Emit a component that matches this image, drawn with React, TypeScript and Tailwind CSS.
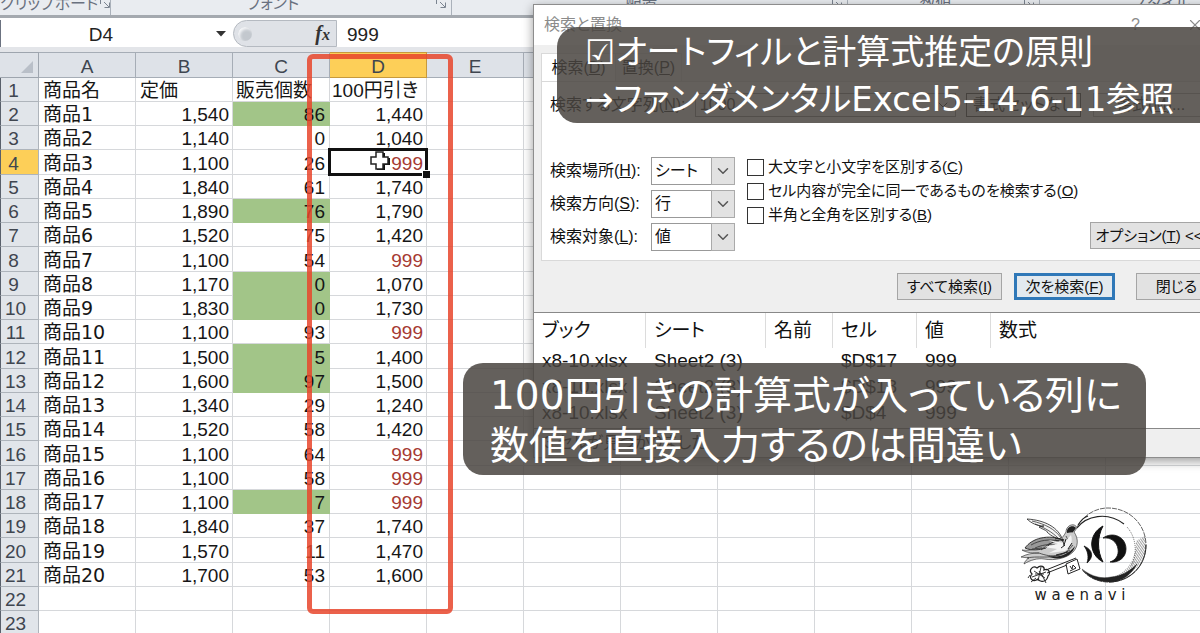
import React from 'react';
import { ChevronDown, X } from 'lucide-react';

interface Product {
  price: string;
  sold: number;
  discounted: string;
  highlighted?: boolean;
}

const products: Product[] = [
  { price: '1,540', sold: 86, discounted: '1,440', highlighted: true },
  { price: '1,140', sold: 0, discounted: '1,040' },
  { price: '1,100', sold: 26, discounted: '999' },
  { price: '1,840', sold: 61, discounted: '1,740' },
  { price: '1,890', sold: 76, discounted: '1,790', highlighted: true },
  { price: '1,520', sold: 75, discounted: '1,420' },
  { price: '1,100', sold: 54, discounted: '999' },
  { price: '1,170', sold: 0, discounted: '1,070', highlighted: true },
  { price: '1,830', sold: 0, discounted: '1,730', highlighted: true },
  { price: '1,100', sold: 93, discounted: '999' },
  { price: '1,500', sold: 5, discounted: '1,400', highlighted: true },
  { price: '1,600', sold: 97, discounted: '1,500', highlighted: true },
  { price: '1,340', sold: 29, discounted: '1,240' },
  { price: '1,520', sold: 58, discounted: '1,420' },
  { price: '1,100', sold: 64, discounted: '999' },
  { price: '1,100', sold: 58, discounted: '999' },
  { price: '1,100', sold: 7, discounted: '999', highlighted: true },
  { price: '1,840', sold: 37, discounted: '1,740' },
  { price: '1,570', sold: 11, discounted: '1,470' },
  { price: '1,700', sold: 53, discounted: '1,600' },
];

const columns = ['A', 'B', 'C', 'D', 'E', 'F', 'G', 'H', 'I', 'J', 'K', 'L'];
const emptyColumns = columns.slice(4);

const results = ['$D$17', '$D$18', '$D$4'];

const Launcher: React.FC = () => (
  <svg className="mb-1.5 h-3 w-3 shrink-0" viewBox="0 0 12 12" fill="none" stroke="#7b8490">
    <path d="M1.5 7V1.5H7M5 5l5 5M10.500 5.500v5h-5" />
  </svg>
);

const RibbonGroup: React.FC<{ label: string; className: string }> = ({ label, className }) => (
  <div className={`flex shrink-0 items-end border-r border-[#aab1ba] pr-1 ${className}`}>
    <span className="flex-1 text-center text-base leading-[22px] whitespace-nowrap text-[#69717f]">{label}</span>
    <Launcher />
  </div>
);

const Ribbon: React.FC = () => (
  <div className="flex h-[18px] items-end overflow-hidden border-b-[3px] border-[#a4a9af] bg-[#e9ecf0] [font-feature-settings:'palt']">
    <RibbonGroup label="クリップボード" className="w-[111px]" />
    <RibbonGroup label="フォント" className="w-[341px]" />
    <RibbonGroup label="配置" className="w-[396px]" />
    <RibbonGroup label="数値" className="w-[192px]" />
    <RibbonGroup label="スタイル" className="w-[260px]" />
  </div>
);

const FormulaBar: React.FC = () => (
  <div className="flex h-[34px] items-center border-b-[5px] border-[#e3e5e9] bg-white pt-0.5">
    <div className="flex h-full w-[233px] items-center border-l border-[#6b7280]">
      <input
        aria-label="名前ボックス"
        defaultValue="D4"
        className="w-[200px] bg-transparent pt-1 text-center text-[19px] text-[#222] outline-none"
      />
      <svg className="ml-3.5 h-2 w-3" viewBox="0 0 12 8" fill="#333">
        <path d="M1 1h10L6 6.500z" />
      </svg>
    </div>
    <div className="flex h-[27px] w-[104px] items-center justify-between rounded-l-full border border-[#b5bac1] bg-[#dfe2e7] pr-1.5 pl-1">
      <span className="h-3.5 w-3.5 rounded-full bg-[#c3c8ce] shadow-[inset_2px_2px_3px_#f5f6f8]" />
      <button className="font-['Liberation_Serif',serif] text-xl leading-6 font-bold text-[#333] italic">
        f<span className="text-base">x</span>
      </button>
    </div>
    <input
      aria-label="数式バー"
      defaultValue="999"
      className="min-w-0 flex-1 bg-transparent pt-1 pl-2.5 text-[19px] text-[#222] outline-none"
    />
  </div>
);

const SelectionFrame: React.FC = () => (
  <>
    <span className="absolute -inset-x-0.5 -top-0.5 -bottom-0.5 z-10 border-[3px] border-[#111]" />
    <span className="absolute -right-1 -bottom-1 z-10 h-2 w-2 border-t border-l border-white bg-[#111]" />
    <svg className="absolute top-0 left-[39px] h-[22px] w-[22px]" viewBox="0 0 22 22">
      <path d="M8 3h8v5h5v7h-5v5H8" fill="#111" />
      <path
        d="M7 2h7v5h5v7h-5v5H7v-5H2V7h5z"
        fill="#fff"
        stroke="#222"
        strokeWidth="1.500"
      />
    </svg>
  </>
);

const cell = 'relative border-r border-b p-0 pt-0.5 whitespace-nowrap';
const line = 'border-[#d6d8db]';
const rowHeader =
  'border-r border-b border-l border-[#aeb4bb] border-l-[#59606b] p-0 pt-0.5 text-[#3f4650] font-normal';

const Sheet: React.FC = () => (
  <table className="w-[1203px] table-fixed border-separate border-spacing-0 text-[19px] leading-[21px] text-[#161616]">
    <colgroup>
      <col className="w-[39px]" />
      {columns.map((name) => (
        <col key={name} className="w-[97px]" />
      ))}
    </colgroup>
    <thead>
      <tr className="h-[26px] bg-[#dee2e8] text-[#3f4650]">
        <th aria-label="すべて選択" className="border-t border-r border-b border-[#9ea5ae] p-0">
          <svg className="mt-1 mr-1 ml-auto h-3.5 w-3.5" viewBox="0 0 14 14" fill="#b9bfc8">
            <path d="M13 1v12H1z" />
          </svg>
        </th>
        {columns.map((name) => (
          <th
            key={name}
            scope="col"
            className={`border-t border-r border-b p-0 pt-0.5 font-normal ${
              name === 'D' ? 'border-[#c79a3c] bg-[#fdcf58]' : 'border-[#a6adb6]'
            }`}
          >
            {name}
          </th>
        ))}
      </tr>
    </thead>
    <tbody className="[&>tr]:h-6 [&>tr:nth-child(4n)]:h-[25px]">
      <tr>
        <th scope="row" className={`${rowHeader} bg-[#e1e5ea] pr-3`}>1</th>
        <td className={`${cell} ${line} pl-1`}>商品名</td>
        <td className={`${cell} ${line} pl-1`}>定価</td>
        <td className={`${cell} ${line} pl-[3px]`}>販売個数</td>
        <td className={`${cell} ${line} pl-0.5 [font-feature-settings:'palt']`}>100円引き</td>
        {emptyColumns.map((name) => (
          <td key={name} className={`${cell} ${line}`} />
        ))}
      </tr>
      {products.map((product, index) => (
        <tr key={index}>
          <th
            scope="row"
            className={`${rowHeader} ${index < 8 ? 'pr-3' : 'pr-2'} ${index === 2 ? 'bg-[#fdcf58]' : 'bg-[#e1e5ea]'}`}
          >
            {index + 2}
          </th>
          <td className={`${cell} ${line} pl-1`}>
            商品<span className="font-['DejaVu_Sans',sans-serif]">{index + 1}</span>
          </td>
          <td className={`${cell} ${line} pr-[3px] text-right`}>{product.price}</td>
          <td
            className={`${cell} pr-1 text-right ${product.highlighted ? 'border-[#a2c588] bg-[#a2c588]' : line}`}
          >
            {product.sold}
          </td>
          <td className={`${cell} ${line} pr-[3px] text-right ${product.discounted === '999' ? 'text-[#a63a32]' : ''}`}>
            {index === 2 && <SelectionFrame />}
            <span className="relative">{product.discounted}</span>
          </td>
          {emptyColumns.map((name) => (
            <td key={name} className={`${cell} ${line}`} />
          ))}
        </tr>
      ))}
      {[22, 23].map((row) => (
        <tr key={row}>
          <th scope="row" className={`${rowHeader} bg-[#e1e5ea] pr-2`}>{row}</th>
          {columns.map((name) => (
            <td key={name} className={`${cell} ${line}`} />
          ))}
        </tr>
      ))}
    </tbody>
  </table>
);

const options = [
  { id: 'place', label: '検索場所', shortcut: 'H', value: 'シート' },
  { id: 'direction', label: '検索方向', shortcut: 'S', value: '行' },
  { id: 'target', label: '検索対象', shortcut: 'L', value: '値' },
];

const checks = [
  { label: '大文字と小文字を区別する', shortcut: 'C' },
  { label: 'セル内容が完全に同一であるものを検索する', shortcut: 'O' },
  { label: '半角と全角を区別する', shortcut: 'B' },
];

const button = 'h-[27px] shrink-0 border border-[#a5a5a5] bg-[#e2e2e2] text-[15px] whitespace-nowrap';

const FindDialog: React.FC = () => (
  <div
    role="dialog"
    aria-labelledby="find-title"
    className="absolute top-1 left-[533px] z-10 w-[692px] border border-[#8d8d8d] bg-[#efefef] text-base leading-6 text-[#111] shadow-[0_3px_10px_rgba(0,0,0,0.4)] [font-feature-settings:'palt']"
  >
    <div className="flex h-10 items-center bg-white pr-5 pl-2.5 text-[#8b8b8b]">
      <h2 id="find-title" className="flex-1">検索と置換</h2>
      <button aria-label="ヘルプ" className="mr-[46px]">?</button>
      <button aria-label="閉じる">
        <X size={18} strokeWidth={1.5} />
      </button>
    </div>

    <div className="px-[7px] pt-2">
      <div className="flex h-7">
        <button className="w-[75px] border border-b-0 border-[#d9d9d9] bg-white">
          検索(<u>D</u>)
        </button>
        <button className="w-[66px] border-t border-r border-[#d9d9d9]">
          置換(<u>P</u>)
        </button>
      </div>
      <div className="border border-[#d9d9d9] bg-white pt-2.5 pr-2 pb-[9px] pl-2">
        <div className="flex h-[26px] items-center">
          <label htmlFor="find-what" className="w-[145px]">
            検索する文字列(<u>N</u>):
          </label>
          <div className="flex h-6 w-[262px] items-center border border-[#888] pr-1">
            <input id="find-what" defaultValue="1000" className="min-w-0 flex-1 pl-1 outline-none" />
            <ChevronDown size={16} strokeWidth={1.5} />
          </div>
          <button className="ml-2.5 h-6 w-[115px] border border-[#333] leading-5">書式セットなし</button>
          <button className="ml-3 h-6 w-[115px] border border-[#a5a5a5] leading-5">
            書式(<u>M</u>)...
          </button>
        </div>

        <div className="mt-[39px] flex">
          <div className="grid w-[185px] shrink-0 grid-cols-[101px_84px] items-center gap-y-[5px]">
            {options.map((option) => (
              <React.Fragment key={option.id}>
                <label htmlFor={option.id} className="whitespace-nowrap">
                  {option.label}(<u>{option.shortcut}</u>):
                </label>
                <div className="relative">
                  <select
                    id={option.id}
                    className="block h-7 w-full appearance-none border border-[#999] bg-white pl-[3px] outline-none"
                  >
                    <option>{option.value}</option>
                  </select>
                  <span className="pointer-events-none absolute inset-y-0 right-0 flex w-6 items-center justify-center border border-[#aaa] bg-[#e2e2e2] text-[#555]">
                    <ChevronDown size={18} />
                  </span>
                </div>
              </React.Fragment>
            ))}
          </div>
          <div className="ml-3 min-w-0 text-[15px]">
            {checks.map((check) => (
              <label key={check.shortcut} className="flex h-6 items-center gap-1 pb-1 whitespace-nowrap">
                <input
                  type="checkbox"
                  className="h-[17px] w-[17px] shrink-0 appearance-none border border-[#333] bg-white"
                />
                <span>
                  {check.label}(<u>{check.shortcut}</u>)
                </span>
              </label>
            ))}
          </div>
          <button className={`${button} mb-0.5 ml-auto w-[118px] self-end`}>
            オプション(<u>T</u>) &lt;&lt;
          </button>
        </div>
      </div>
    </div>

    <div className="flex justify-end py-3 pr-[7px]">
      <button className={`${button} w-[105px]`}>
        すべて検索(<u>I</u>)
      </button>
      <button className="ml-3 h-[27px] w-[101px] shrink-0 border-[3px] border-[#2f78b8] bg-[#e2e9ef] text-[15px] leading-[20px] whitespace-nowrap">
        次を検索(<u>F</u>)
      </button>
      <button className={`${button} ml-[21px] w-[81px]`}>閉じる</button>
    </div>

    <div className="h-[117px] border-y border-[#888] bg-white">
      <table className="w-full table-fixed border-separate border-spacing-0 text-left text-[19px]">
        <thead>
          <tr className="h-[35px] [&>th]:border-r [&>th]:border-[#dcdcdc] [&>th]:p-0 [&>th]:pl-2 [&>th]:font-normal">
            <th className="w-[112px]">ブック</th>
            <th className="w-[120px]">シート</th>
            <th className="w-[67px]">名前</th>
            <th className="w-[84px]">セル</th>
            <th className="w-[74px]">値</th>
            <th>数式</th>
          </tr>
        </thead>
        <tbody className="[&_td]:p-0 [&_td]:pl-2 [&>tr]:h-[26px]">
          {results.map((address) => (
            <tr key={address}>
              <td>x8-10.xlsx</td>
              <td>Sheet2 (3)</td>
              <td />
              <td>{address}</td>
              <td>999</td>
              <td />
            </tr>
          ))}
        </tbody>
      </table>
    </div>
    <p className="h-7 pl-2.5 leading-7">3 セルが見つかりました</p>
  </div>
);

const caption =
  "absolute z-20 bg-[#49443f]/85 font-['DejaVu_Sans','Noto_Sans_CJK_JP',sans-serif] whitespace-nowrap text-white [font-feature-settings:'palt']";

const Logo: React.FC = () => (
  <div className="absolute right-[52px] bottom-[28px] w-[128px] text-center">
    <svg className="w-full" viewBox="0 0 128 78" fill="none" stroke="#222" role="img" aria-label="鍵をくわえた鳥と月">
      <defs>
        <pattern id="hatch" width="2" height="3" patternUnits="userSpaceOnUse" patternTransform="rotate(-35)">
          <path d="M0 0v3" stroke="#444" strokeWidth="1" />
        </pattern>
      </defs>
      {/* crescent */}
      <path d="M116 34c0 19-9 33-27 37 20 2 36-14 37-32l-1-10z" fill="url(#hatch)" stroke="none" />
      <path d="M57 20C64 8 75 1 88 1c22 0 38 17 38 37S110 75 89 75c-11 0-20-4-27-12" strokeWidth=".7" strokeDasharray="5 1" />
      <path d="M126 38c0 21-16 37-37 37" strokeWidth=".9" />
      <path d="M62 62c10 8 20 10 29 8 10-1 18-5 26-13-6 11-15 18-28 18-12 0-21-5-27-13z" fill="#222" strokeWidth=".4" />
      <path d="M57 21C66 9 87 4 104 17M58 18c3-5 7-8 10-9" strokeWidth="1.100" />
      <path d="M107 20c9 10 11 26 4 39" strokeWidth=".6" strokeDasharray="1 1" />
      {/* monogram */}
      <path d="M83 19c-15 8-15 28 0 36-6-11-6-25 0-36z" fill="#111" stroke="#111" strokeWidth="1" />
      <path d="M83 31c10-7 23-1 23 11 0 9-8 14-16 13 6-2 9-7 8-13-1-7-7-12-15-11z" fill="#111" stroke="#111" strokeWidth=".8" />
      <path d="M64 39c9 4 10 11 3 17 2-6 1-12-3-17z" fill="#111" stroke="#111" strokeWidth=".8" />
      {/* bird */}
      <path d="M46 25c0-7 9-10 11-4l-3 4c5 7 4 15-1 20-6 6-18 9-29 7-6-1-14 1-20 5 1-3 3-5 5-6l-8-1c6-3 11-4 18-4-6 0-12 0-17-3 8 1 14-1 20-4 10-5 17-1 24-14z" fill="#ccc" strokeWidth=".6" />
      <path d="M7 12c17 1 32 8 36 22-6-3-11-4-16-9 1-1-5-3-8-5l5-1c-7 0-13-3-17-7z" fill="#f4f4f4" strokeWidth=".8" />
      <path d="M5 41c7-10 23-14 39-8-8-1-14 3-18 8-7 2-14 3-21 0z" fill="#999" strokeWidth=".9" />
      <path d="M12 14c13 3 23 8 29 17M15 17c10 4 17 8 23 14M11 38c9-5 18-6 28-4M15 41c7-3 13-4 20-3M19 46c13 5 25 4 34-8M7 51c13-3 27 3 43-8M47 24l6 1M46 29l5 10M12 42l10-1M30 36l-9 7" strokeWidth=".7" />
      <path d="M28 33l10 4-14 3 13 2-8 4 16-2c6-4 8-9 6-16l-7 8z" fill="#f4f4f4" stroke="none" />
      <path d="M47 26c-1-6 6-9 9-5l-3 4zM27 49c11 2 21-1 28-10-2 10-16 16-28 10z" fill="#222" stroke="none" />
      <path d="M35 32c6-2 9 2 9 7M44 38l2-6M41 41l4-3M48 42l4-6M36 48l12-3" strokeWidth="1" />
      {/* key */}
      <path d="M26 63l30-12M27 66l30-12" strokeWidth="1" />
      <path d="M46 57l11-5 3 10-12 5zM50 59l2 3 1-4 3 3M50 64l6-3" fill="#fff" strokeWidth="1" />
      <path d="M17 61c4-4 8-1 7 2 5-2 7 3 4 6-1 6-8 7-10 3-5 4-10-1-6-5-4-4 1-9 5-6z" strokeWidth="1.200" />
      <path d="M14 64l11 7M21 60l-3 14M12 70l14-5M22 68l4 8M10 68l-2 3M16 71l-5 4M15 67h9M19 64l4 6" strokeWidth=".9" />
    </svg>
    <p className="pr-2 font-['DejaVu_Sans',sans-serif] text-[15px] leading-5 whitespace-nowrap text-[#222]">w a e n a v i</p>
  </div>
);

const App: React.FC = () => (
  <main className="relative h-screen overflow-hidden bg-white font-['Liberation_Sans','Noto_Sans_CJK_JP',sans-serif]">
    <Ribbon />
    <FormulaBar />
    <Sheet />
    <FindDialog />
    <div className="absolute top-[54px] left-[307px] z-20 h-[560px] w-[146px] rounded-md border-[5px] border-[#e8452c]/85" />
    <div className={`${caption} top-[27px] right-0 left-[557px] rounded-l-[20px] pt-0.5 pl-[28px] text-[34px] leading-[47px]`}>
      <p>☑オートフィルと計算式推定の原則</p>
      <p>→ファンダメンタルExcel5-14,6-11参照</p>
    </div>
    <div className={`${caption} top-[363px] left-[463px] rounded-[20px] pt-2 pr-6 pb-1 pl-[27px] text-[39px] leading-[50px]`}>
      <p>100円引きの計算式が入っている列に</p>
      <p>数値を直接入力するのは間違い</p>
    </div>
    <Logo />
  </main>
);

export default App;
